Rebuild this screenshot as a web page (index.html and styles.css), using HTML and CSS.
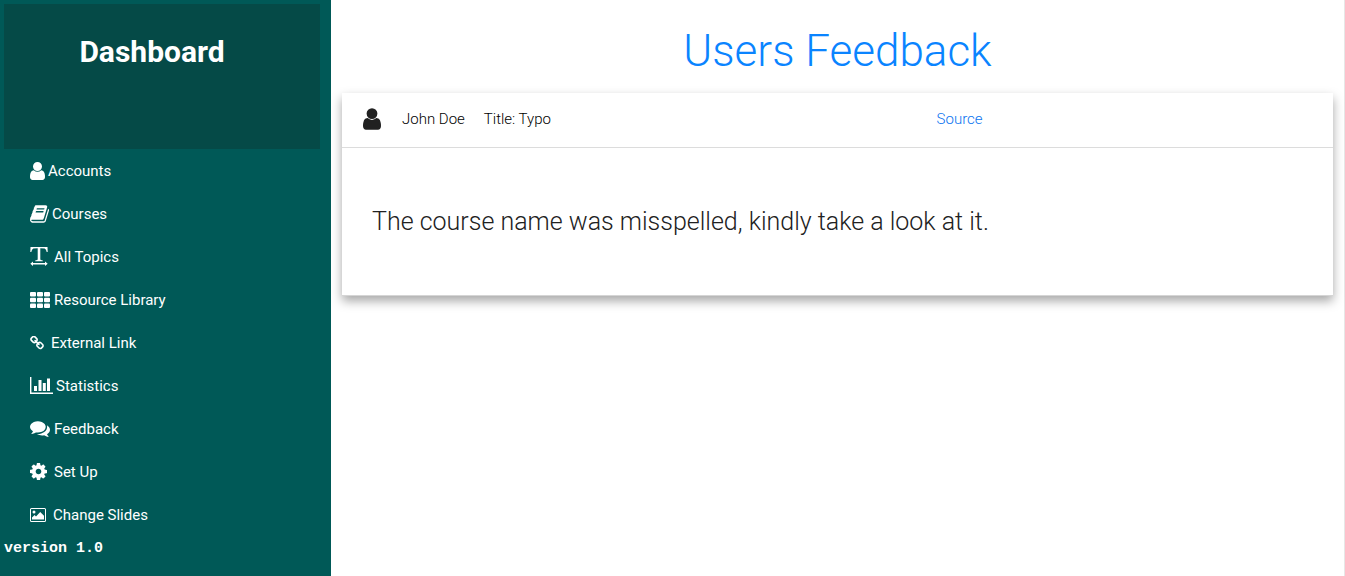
FILE: index.html
```
<!DOCTYPE html>
<html lang="en">
<head>
<meta charset="utf-8">
<title>Users Feedback</title>
<link rel="stylesheet" href="styles.css">
</head>
<body>
<div class="layout">
  <aside class="sidebar">
    <div class="brand"><h2 class="brand-title">Dashboard</h2></div>
    <nav class="menu">
      <a class="menu-link" href="#"><svg class="icon icon-user" viewBox="256 128 1280 1536"><path d="M1536 1399q0 109-62.5 187t-150.5 78h-854q-88 0-150.5-78t-62.5-187q0-85 8.5-160.5t31.5-152 58.5-131 94-89 134.5-34.5q131 128 313 128t313-128q76 0 134.5 34.5t94 89 58.5 131 31.5 152 8.5 160.5zm-256-887q0 159-112.5 271.5t-271.5 112.5-271.5-112.5-112.5-271.5 112.5-271.5 271.5-112.5 271.5 112.5 112.5 271.5z"/></svg>Accounts</a>
      <a class="menu-link" href="#"><svg class="icon icon-book" viewBox="64 128 1664 1536"><path d="M1703 478q40 57 18 129l-275 906q-19 64-76.5 107.5t-122.5 43.5h-923q-77 0-148.5-53.5t-99.5-131.5q-24-67-2-127 0-4 3-27t4-37q1-8-3-21.5t-3-19.5q2-11 8-21t16.5-23.5 16.5-23.5q23-38 45-91.5t30-91.5q3-10 .5-30t-.5-28q3-11 17-28t17-23q21-36 42-92t25-90q1-9-2.5-32t.5-28q4-13 22-30.5t22-22.5q19-26 42.5-84.5t27.5-96.5q1-8-3-25.5t-2-26.5q2-8 9-18t18-23 17-21q8-12 16.5-30.5t15-35 16-36 19.5-32 26.5-23.5 36-11.5 47.5 5.5l-1 3q38-9 51-9h761q74 0 114 56t18 130l-274 906q-36 119-71.5 153.5t-128.5 34.5h-869q-27 0-38 15-11 16-1 43 24 70 144 70h923q29 0 56-15.5t35-41.5l300-987q7-22 5-57 38 15 59 43zm-1064 2q-4 13 2 22.5t20 9.5h608q13 0 25.5-9.5t16.5-22.5l21-64q4-13-2-22.5t-20-9.5h-608q-13 0-25.5 9.5t-16.5 22.5zm-83 256q-4 13 2 22.5t20 9.5h608q13 0 25.5-9.5t16.5-22.5l21-64q4-13-2-22.5t-20-9.5h-608q-13 0-25.5 9.5t-16.5 22.5z"/></svg>Courses</a>
      <a class="menu-link" href="#"><svg class="icon icon-type" viewBox="0 0 18 19"><path d="M.5 0H17.500L17.700 5H16.700Q16.300 2 14.600 1.500L10.300 1.300V12.500Q10.300 13.200 12.800 13.500V14.200H5.200V13.500Q7.700 13.200 7.700 12.500V1.300L3.400 1.500Q1.700 2 1.300 5H.3ZM.3 16.700 3 14.500V16H15V14.500L17.700 16.700 15 18.900V17.400H3V18.900Z"/></svg>All Topics</a>
      <a class="menu-link" href="#"><svg class="icon icon-grid" viewBox="0 0 20 16"><rect x="0" y="0" width="6" height="4.500" rx="1"/><rect x="7" y="0" width="6" height="4.500" rx="1"/><rect x="14" y="0" width="6" height="4.500" rx="1"/><rect x="0" y="5.700" width="6" height="4.600" rx="1"/><rect x="7" y="5.700" width="6" height="4.600" rx="1"/><rect x="14" y="5.700" width="6" height="4.600" rx="1"/><rect x="0" y="11.500" width="6" height="4.500" rx="1"/><rect x="7" y="11.500" width="6" height="4.500" rx="1"/><rect x="14" y="11.500" width="6" height="4.500" rx="1"/></svg>Resource Library</a>
      <a class="menu-link" href="#"><svg class="icon icon-link" viewBox="64 64 1664 1664"><path d="M1520 1216q0-40-28-68l-208-208q-28-28-68-28-42 0-72 32 3 3 19 18.5t21.5 21.500 15 19 13 25.500 3.500 27.500q0 40-28 68t-68 28q-15 0-27.500-3.500t-25.500-13-19-15-21.500-21.500-18.500-19q-33 31-33 73 0 40 28 68l206 207q27 27 68 27 40 0 68-26l147-146q28-28 28-67zm-703-705q0-40-28-68l-206-207q-28-28-68-28-39 0-68 27l-147 146q-28 28-28 67 0 40 28 68l208 208q27 27 68 27 42 0 72-31-3-3-19-18.500t-21.500-21.500-15-19-13-25.500-3.500-27.500q0-40 28-68t68-28q15 0 27.500 3.500t25.500 13 19 15 21.500 21.500 18.500 19q33-31 33-73zm895 705q0 120-85 203l-147 146q-83 83-203 83-121 0-204-85l-206-207q-83-83-83-203 0-123 88-209l-88-88q-86 88-208 88-120 0-204-84l-208-208q-84-84-84-204t85-203l147-146q83-83 203-83 121 0 204 85l206 207q83 83 83 203 0 123-88 209l88 88q86-88 208-88 120 0 204 84l208 208q84 84 84 204z"/></svg>External Link</a>
      <a class="menu-link" href="#"><svg class="icon icon-chart" viewBox="0 0 23 17"><path d="M0 0H1.400V15.600H23V17H0ZM4 9H7V14H4ZM8.500 3H11.500V14H8.500ZM12.800 6H15.800V14H12.800ZM17 1.500H20V14H17Z"/></svg>Statistics</a>
      <a class="menu-link" href="#"><svg class="icon icon-comments" viewBox="0 256 1792 1408"><path d="M1408 768q0 139-94 257t-256.500 186.500-353.500 68.500q-86 0-176-16-124 88-278 128-36 9-86 16h-3q-11 0-20.500-8t-11.500-21q-1-3-1-6.500t.5-6.500 2-6l2.500-5 3.500-5.500 4-5 4.500-5 4-4.500q5-6 23-25t26-29.500 22.500-29 25-38.500 20.500-44q-124-72-195-177t-71-224q0-139 94-257t256.500-186.500 353.500-68.500 353.500 68.500 256.500 186.500 94 257zm384 256q0 120-71 224.500t-195 176.500q10 24 20.500 44t25 38.500 22.500 29 26 29.500 23 25q1 1 4 4.500t4.500 5 4 5 3.500 5.500l2.500 5 2 6 .5 6.500-1 6.500q-3 14-13 22t-22 7q-50-7-86-16-154-40-278-128-90 16-176 16-271 0-472-132 58 4 88 4 161 0 309-45t264-129q125-92 192-212t67-254q0-77-23-152 129 71 204 178t75 230z"/></svg>Feedback</a>
      <a class="menu-link" href="#"><svg class="icon icon-cog" viewBox="128 128 1536 1536"><path d="M1152 896q0-106-75-181t-181-75-181 75-75 181 75 181 181 75 181-75 75-181zm512-109v222q0 12-8 23t-20 13l-185 28q-19 54-39 91 35 50 107 138 10 12 10 25t-9 23q-27 37-99 108t-94 71q-12 0-26-9l-138-108q-44 23-91 38-16 136-29 186-7 28-36 28h-222q-14 0-24.500-8.500t-11.500-21.500l-28-184q-49-16-90-37l-141 107q-10 9-25 9-14 0-25-11-126-114-165-168-7-10-7-23 0-12 8-23 15-21 51-66.500t54-70.500q-27-50-41-99l-183-27q-13-2-21-12.500t-8-23.500v-222q0-12 8-23t19-13l186-28q14-46 39-92-40-57-107-138-10-12-10-24 0-10 9-23 26-36 98.500-107.500t94.500-71.500q13 0 26 10l138 107q44-23 91-38 16-136 29-186 7-28 36-28h222q14 0 24.500 8.500t11.500 21.500l28 184q49 16 90 37l142-107q9-9 24-9 13 0 25 10 129 119 165 170 7 8 7 22 0 12-8 23-15 21-51 66.500t-54 70.500q26 50 41 98l183 28q13 2 21 12.500t8 23.500z"/></svg>Set Up</a>
      <a class="menu-link" href="#"><svg class="icon icon-image" viewBox="0 0 16 14"><path fill-rule="evenodd" d="M1.500 0H14.500Q16 0 16 1.500V12.500Q16 14 14.500 14H1.500Q0 14 0 12.500V1.500Q0 0 1.500 0ZM1.500 1Q1 1 1 1.500V12.500Q1 13 1.500 13H14.500Q15 13 15 12.500V1.500Q15 1 14.500 1ZM2 11.500V9.500L4.600 7 6 8.400 10.200 4 14 7.800V11.500Z"/><circle cx="4" cy="4" r="1.500"/></svg>Change Slides</a>
    </nav>
    <p class="version">version 1.0</p>
  </aside>
  <main class="content">
    <h1 class="title">Users Feedback</h1>
    <article class="card">
      <header class="card-header">
        <div class="author">
          <svg class="avatar" viewBox="256 128 1280 1536"><path d="M1536 1399q0 109-62.500 187t-150.500 78h-854q-88 0-150.500-78t-62.500-187q0-85 8.500-160.500t31.500-152 58.500-131 94-89 134.500-34.500q131 128 313 128t313-128q76 0 134.500 34.500t94 89 58.500 131 31.500 152 8.500 160.500zm-256-887q0 159-112.500 271.500t-271.500 112.500-271.500-112.500-112.500-271.500 112.500-271.500 271.500-112.500 271.500 112.500 112.500 271.500z"/></svg>
          <span class="name">John Doe</span>
          <span>Title: Typo</span>
        </div>
        <a class="source" href="#">Source</a>
      </header>
      <p class="message">The course name was misspelled, kindly take a look at it.</p>
    </article>
  </main>
</div>
</body>
</html>
```
FILE: styles.css
```
* { box-sizing: border-box; }
body {
  margin: 0;
  font-family: Roboto, "Liberation Sans", sans-serif;
  font-size: 15px;
  line-height: 20px;
  color: #212121;
  background: #fff;
}
.layout { display: flex; min-height: 100vh; }
.sidebar {
  flex: 0 0 331px;
  padding: 4px;
  color: #fff;
  background: #005957;
}
.brand {
  height: 145px;
  margin-right: 7px;
  padding: 28px 20px 0 0;
  background: #054a47;
}
.brand-title {
  margin: 0;
  font-size: 30px;
  line-height: 40px;
  font-weight: 700;
  text-align: center;
}
.menu { display: flex; flex-direction: column; }
.menu-link {
  display: flex;
  align-items: center;
  height: 43px;
  padding-left: 26px;
  color: #fff;
  text-decoration: none;
}
.icon { flex: none; fill: currentColor; }
.icon-user { width: 15px; height: 18px; margin-right: 3px; }
.icon-book { width: 19px; height: 18px; margin-right: 3px; }
.icon-type { width: 18px; height: 19px; margin-right: 6px; }
.icon-grid { width: 20px; height: 16px; margin-right: 4px; }
.icon-link { width: 14px; height: 14px; margin-right: 7px; }
.icon-chart { width: 23px; height: 17px; margin-right: 3px; }
.icon-comments { width: 20px; height: 16px; margin-right: 4px; }
.icon-cog { width: 17px; height: 17px; margin-right: 7px; }
.icon-image { width: 16px; height: 14px; margin-right: 7px; }
.version {
  margin: 3px 0 0;
  font-family: "Liberation Mono", monospace;
  font-size: 15px;
  font-weight: 700;
}
.content {
  flex: 1;
  min-width: 0;
  padding: 24px 11px;
  border-right: 1px solid #e7e7e7;
}
.title {
  margin: 0 0 15px;
  font-size: 44px;
  line-height: 54px;
  font-weight: 300;
  text-align: center;
  color: #0a84ff;
}
.card {
  background: #fff;
  border-bottom: 1px solid #d5d5d5;
  box-shadow: 0 5px 10px rgba(0, 0, 0, 0.35);
  font-weight: 300;
}
.card-header {
  display: grid;
  grid-template-columns: 3fr 2fr;
  height: 55px;
  padding-bottom: 2px;
  align-items: center;
  border-bottom: 1px solid #dcdcdc;
  color: #000;
}
.author { display: flex; align-items: center; padding-left: 21px; }
.avatar { width: 18px; height: 22px; margin-right: 21px; fill: #212121; }
.name { margin-right: 19px; }
.source { color: #0a74f0; text-decoration: none; }
.message {
  margin: 0;
  padding: 56px 30px;
  font-size: 25px;
  line-height: 35px;
}
```
